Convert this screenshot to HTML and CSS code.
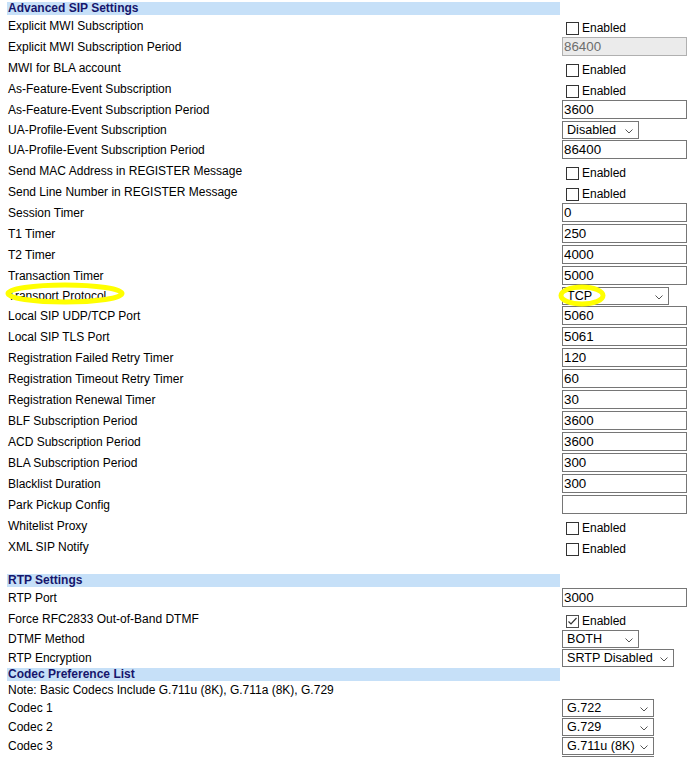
FILE: index.html
```html
<!DOCTYPE html>
<html>
<head>
<meta charset="utf-8">
<link rel="stylesheet" href="styles.css">
</head>
<body>
<div class="page">
  <div class="grid">
    <div class="head">Advanced SIP Settings</div><div></div>

    <div class="lbl r21">Explicit MWI Subscription</div>
    <div class="val r21 cbv"><span class="cb"></span><span>Enabled</span></div>

    <div class="lbl r21">Explicit MWI Subscription Period</div>
    <div class="val r21"><input class="txt" type="text" value="86400" disabled></div>

    <div class="lbl r21">MWI for BLA account</div>
    <div class="val r21 cbv"><span class="cb"></span><span>Enabled</span></div>

    <div class="lbl r21">As-Feature-Event Subscription</div>
    <div class="val r21 cbv"><span class="cb"></span><span>Enabled</span></div>

    <div class="lbl r21">As-Feature-Event Subscription Period</div>
    <div class="val r21"><input class="txt" type="text" value="3600"></div>

    <div class="lbl r19">UA-Profile-Event Subscription</div>
    <div class="val r19"><div class="sel w77"><span>Disabled</span><svg width="8" height="5" viewBox="0 0 8 5"><polyline points="0.5,0.5 4,4 7.5,0.5" fill="none" stroke="#555" stroke-width="1"/></svg></div></div>

    <div class="lbl r21">UA-Profile-Event Subscription Period</div>
    <div class="val r21"><input class="txt" type="text" value="86400"></div>

    <div class="lbl r21">Send MAC Address in REGISTER Message</div>
    <div class="val r21 cbv"><span class="cb"></span><span>Enabled</span></div>

    <div class="lbl r21">Send Line Number in REGISTER Message</div>
    <div class="val r21 cbv"><span class="cb"></span><span>Enabled</span></div>

    <div class="lbl r21">Session Timer</div>
    <div class="val r21"><input class="txt" type="text" value="0"></div>

    <div class="lbl r21">T1 Timer</div>
    <div class="val r21"><input class="txt" type="text" value="250"></div>

    <div class="lbl r21">T2 Timer</div>
    <div class="val r21"><input class="txt" type="text" value="4000"></div>

    <div class="lbl r21">Transaction Timer</div>
    <div class="val r21"><input class="txt" type="text" value="5000"></div>

    <div class="lbl r19 mark">Transport Protocol
      <svg class="ring ring-l" width="130" height="26" viewBox="0 0 130 26"><ellipse cx="65" cy="12.5" rx="57" ry="8.5" fill="none" stroke="#ffff00" stroke-width="5"/></svg>
    </div>
    <div class="val r19 mark"><div class="sel w107"><span>TCP</span><svg width="8" height="5" viewBox="0 0 8 5"><polyline points="0.5,0.5 4,4 7.5,0.5" fill="none" stroke="#555" stroke-width="1"/></svg></div>
      <svg class="ring ring-r" width="56" height="28" viewBox="0 0 56 28"><ellipse cx="27" cy="13.5" rx="21" ry="8.5" fill="none" stroke="#ffff00" stroke-width="5"/></svg>
    </div>

    <div class="lbl r21">Local SIP UDP/TCP Port</div>
    <div class="val r21"><input class="txt" type="text" value="5060"></div>

    <div class="lbl r21">Local SIP TLS Port</div>
    <div class="val r21"><input class="txt" type="text" value="5061"></div>

    <div class="lbl r21">Registration Failed Retry Timer</div>
    <div class="val r21"><input class="txt" type="text" value="120"></div>

    <div class="lbl r21">Registration Timeout Retry Timer</div>
    <div class="val r21"><input class="txt" type="text" value="60"></div>

    <div class="lbl r21">Registration Renewal Timer</div>
    <div class="val r21"><input class="txt" type="text" value="30"></div>

    <div class="lbl r21">BLF Subscription Period</div>
    <div class="val r21"><input class="txt" type="text" value="3600"></div>

    <div class="lbl r21">ACD Subscription Period</div>
    <div class="val r21"><input class="txt" type="text" value="3600"></div>

    <div class="lbl r21">BLA Subscription Period</div>
    <div class="val r21"><input class="txt" type="text" value="300"></div>

    <div class="lbl r21">Blacklist Duration</div>
    <div class="val r21"><input class="txt" type="text" value="300"></div>

    <div class="lbl r21">Park Pickup Config</div>
    <div class="val r21"><input class="txt" type="text" value=""></div>

    <div class="lbl r21">Whitelist Proxy</div>
    <div class="val r21 cbv"><span class="cb"></span><span>Enabled</span></div>

    <div class="lbl r21">XML SIP Notify</div>
    <div class="val r21 cbv"><span class="cb"></span><span>Enabled</span></div>

    <div class="spacer"></div><div class="spacer"></div>

    <div class="head">RTP Settings</div><div></div>

    <div class="lbl r21">RTP Port</div>
    <div class="val r21"><input class="txt" type="text" value="3000"></div>

    <div class="lbl r21">Force RFC2833 Out-of-Band DTMF</div>
    <div class="val r21 cbv"><span class="cb on"><svg width="11" height="11" viewBox="0 0 11 11"><polyline points="1.5,5.5 4,8 9.5,2" fill="none" stroke="#333" stroke-width="1.2"/></svg></span><span>Enabled</span></div>

    <div class="lbl r19">DTMF Method</div>
    <div class="val r19"><div class="sel w77"><span>BOTH</span><svg width="8" height="5" viewBox="0 0 8 5"><polyline points="0.5,0.5 4,4 7.5,0.5" fill="none" stroke="#555" stroke-width="1"/></svg></div></div>

    <div class="lbl r20">RTP Encryption</div>
    <div class="val r20"><div class="sel w112"><span>SRTP Disabled</span><svg width="8" height="5" viewBox="0 0 8 5"><polyline points="0.5,0.5 4,4 7.5,0.5" fill="none" stroke="#555" stroke-width="1"/></svg></div></div>

    <div class="head">Codec Preference List</div><div></div>

    <div class="lbl note">Note: Basic Codecs Include G.711u (8K), G.711a (8K), G.729</div><div class="note"></div>

    <div class="lbl r19">Codec 1</div>
    <div class="val r19"><div class="sel w92"><span>G.722</span><svg width="8" height="5" viewBox="0 0 8 5"><polyline points="0.5,0.5 4,4 7.5,0.5" fill="none" stroke="#555" stroke-width="1"/></svg></div></div>

    <div class="lbl r19">Codec 2</div>
    <div class="val r19"><div class="sel w92"><span>G.729</span><svg width="8" height="5" viewBox="0 0 8 5"><polyline points="0.5,0.5 4,4 7.5,0.5" fill="none" stroke="#555" stroke-width="1"/></svg></div></div>

    <div class="lbl r19">Codec 3</div>
    <div class="val r19"><div class="sel w92"><span>G.711u (8K)</span><svg width="8" height="5" viewBox="0 0 8 5"><polyline points="0.5,0.5 4,4 7.5,0.5" fill="none" stroke="#555" stroke-width="1"/></svg></div></div>

    <div class="lbl r19"></div>
    <div class="val r19"><div class="sel w92"></div></div>
  </div>
</div>
</body>
</html>
```

FILE: styles.css
```css
html, body {
  margin: 0;
  padding: 0;
  overflow: hidden;
  background: #ffffff;
}
body {
  font-family: "Liberation Sans", Arial, sans-serif;
  font-size: 12px;
  color: #000;
}
.page {
  padding: 2px 0 0 7px;
}
.grid {
  display: grid;
  grid-template-columns: 553px 125px;
  column-gap: 2px;
}
.head {
  height: 13px;
  line-height: 13px;
  background: #c6e0f8;
  color: #16166c;
  font-weight: bold;
  padding-left: 1px;
}
.lbl {
  display: flex;
  align-items: center;
  padding-left: 1px;
  white-space: nowrap;
}
.val {
  display: flex;
  align-items: center;
}
.r21 { height: 21px; }
.r20 { height: 20px; }
.r19 { height: 19px; }
.note {
  height: 17px;
  display: flex;
  align-items: center;
}
.spacer { height: 17px; }
.cbv {
  padding-top: 5px;
  box-sizing: border-box;
}
.cb {
  width: 13px;
  height: 13px;
  box-sizing: border-box;
  border: 1px solid #333;
  background: #fff;
  margin: 0 3px 0 4px;
  display: flex;
  align-items: center;
  justify-content: center;
}
.cb.on {
  border-color: #4d4d4d;
}
.txt {
  box-sizing: border-box;
  width: 125px;
  height: 19px;
  margin: 0;
  border: 1px solid #767676;
  border-radius: 0;
  padding: 0 1px;
  font-family: "Liberation Sans", Arial, sans-serif;
  font-size: 13.333px;
  color: #000;
  background: #fff;
  outline: none;
}
.txt:disabled {
  background: #ebebeb;
  border-color: #b0b0b0;
  color: #6d6d6d;
}
.sel {
  box-sizing: border-box;
  height: 18px;
  border: 1px solid #767676;
  background: #fff;
  display: flex;
  align-items: center;
  justify-content: space-between;
  padding: 0 5px 0 4px;
  font-size: 12.6px;
  white-space: nowrap;
}
.sel svg {
  margin-top: 3px;
  flex: none;
}
.w77 { width: 77px; }
.w92 { width: 92px; }
.w107 { width: 107px; }
.w112 { width: 112px; }
.mark { position: relative; }
.ring {
  position: absolute;
  pointer-events: none;
}
.ring-l {
  left: -7px;
  top: -5px;
}
.ring-r {
  left: -7px;
  top: -4px;
}
```
